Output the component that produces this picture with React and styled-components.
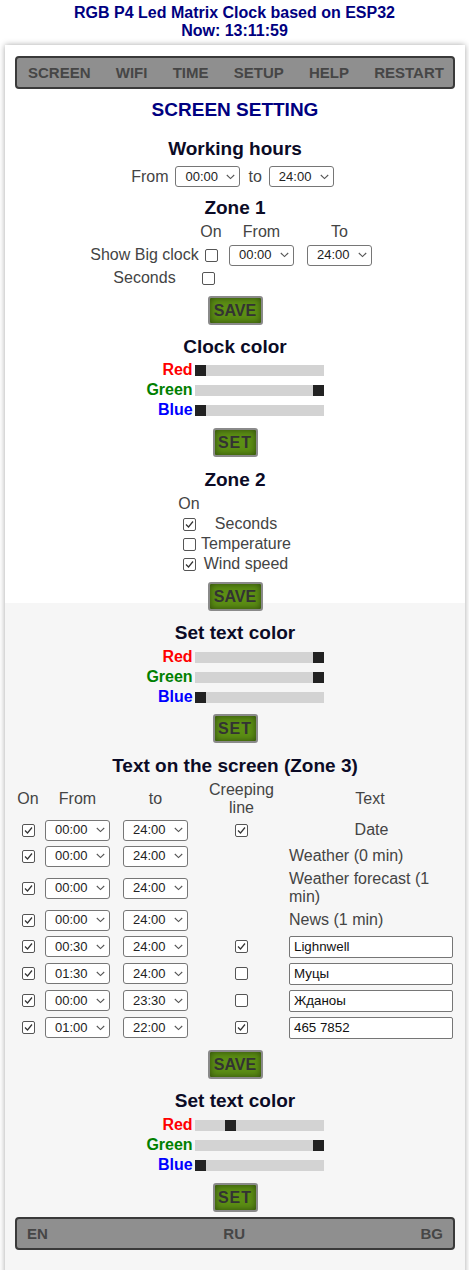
import React from 'react';
import styled, { createGlobalStyle } from 'styled-components';

const Global = createGlobalStyle`
  html, body { margin: 0; padding: 0; background: #fff; }
  body { font-family: "Liberation Sans", Arial, sans-serif; color: #444; font-size: 16px; }
`;

const Header = styled.header`
  padding-top: 4px;
  text-align: center;
  color: #000080;
  font-weight: bold;
  font-size: 16px;
  line-height: 18px;
`;

const Container = styled.main`
  width: 460px;
  margin: 5px 0 0 5px;
  background: #fff;
  box-shadow: 0 0 6px rgba(0, 0, 0, 0.35);
`;

const Section = styled.section`
  display: flex;
  flex-direction: column;
  align-items: center;
  padding: ${p => (p.$gray ? '0 10px 30px' : '11px 10px 0')};
  background: ${p => (p.$gray ? '#f6f6f6' : '#fff')};
`;

const Bar = styled.nav`
  align-self: stretch;
  box-sizing: border-box;
  height: 33px;
  margin-top: ${p => p.$mt || 0}px;
  display: flex;
  align-items: center;
  justify-content: space-between;
  padding: ${p => p.$pad};
  background: #8f8f8f;
  border: 2px solid #3a3a3a;
  border-radius: 4px;
  font-weight: bold;
  font-size: 15px;
  color: #464646;
`;

const Title = styled.h1`
  margin: 10px 0 0;
  font-size: 19px;
  line-height: 22px;
  color: #000080;
`;

const Heading = styled.h2`
  margin: ${p => p.$mt}px 0 0;
  font-size: 19px;
  line-height: 22px;
  color: #0b0b26;
`;

const FromRow = styled.div`
  margin: 6px 5px 0 0;
  height: 21px;
  display: flex;
  align-items: center;
  font-size: 16px;
  color: #444;
  & > span:first-child { margin-right: 7px; }
  & > span.to { margin: 0 7px 0 8px; }
`;

const Zone1Grid = styled.div`
  margin-top: 4px;
  display: grid;
  grid-template-columns: 108px 25px 76px 80px;
  grid-template-rows: 18px 22px 18px;
  row-gap: 3px;
  justify-content: center;
  justify-items: center;
  align-items: center;
  font-size: 16px;
  line-height: 18px;
  color: #444;
`;

const Cell = styled.div`
  justify-self: ${p => p.$justify || 'center'};
  margin-left: ${p => p.$ml || 0}px;
  display: flex;
  align-items: center;
  white-space: nowrap;
`;

const SelectBox = styled.div`
  box-sizing: border-box;
  width: 65px;
  height: 21px;
  display: flex;
  align-items: center;
  justify-content: space-between;
  padding: 0 4px 0 9px;
  background: #fff;
  border: 1px solid #767676;
  border-radius: 3px;
  font-size: 13px;
  color: #222;
`;

const Box = styled.span`
  box-sizing: border-box;
  width: 13px;
  height: 13px;
  display: inline-flex;
  align-items: center;
  justify-content: center;
  background: #fff;
  border: 1px solid #555;
  border-radius: 2px;
`;

const GreenButton = styled.button`
  position: relative;
  z-index: 1;
  box-sizing: border-box;
  width: ${p => p.$w}px;
  height: 29px;
  margin: ${p => p.$mt}px 0 ${p => p.$mb || 0}px;
  padding: 0;
  background: #5c8f14;
  box-shadow: inset 0 0 7px rgba(0, 0, 0, 0.5);
  border: 2px solid #8a8a8a;
  border-radius: 3px;
  font-family: "Liberation Sans", Arial, sans-serif;
  font-weight: bold;
  font-size: 16px;
  letter-spacing: ${p => p.$ls || 0}px;
  color: #333;
`;

const SliderGrid = styled.div`
  margin-top: ${p => p.$mt}px;
  display: grid;
  grid-template-columns: auto 129px;
  grid-auto-rows: 20px;
  column-gap: 2px;
  justify-content: center;
  align-items: center;
`;

const SliderLabel = styled.span`
  justify-self: end;
  font-weight: bold;
  font-size: 16px;
  line-height: 20px;
  color: ${p => p.$color};
`;

const Track = styled.div`
  position: relative;
  height: 11px;
  background: #d3d3d3;
`;

const Thumb = styled.div`
  position: absolute;
  top: 0;
  width: 11px;
  height: 11px;
  background: #222;
`;

const Zone2Grid = styled.div`
  margin-top: 3px;
  display: grid;
  grid-template-columns: 22px 92px;
  grid-auto-rows: 20px;
  justify-content: center;
  justify-items: center;
  align-items: center;
  font-size: 16px;
  line-height: 18px;
  color: #444;
`;

const Table = styled.div`
  align-self: stretch;
  margin-top: 4px;
  display: flex;
  flex-direction: column;
  font-size: 16px;
  line-height: 18px;
  color: #444;
`;

const TRow = styled.div`
  height: ${p => p.$h}px;
  display: grid;
  grid-template-columns: 26px 73px 83px 89px 168px;
  justify-items: center;
  align-items: center;
`;

const HeadCell = styled.div`
  text-align: center;
`;

const TextCell = styled.div`
  justify-self: stretch;
  box-sizing: border-box;
  padding-left: 3px;
  text-align: ${p => (p.$center ? 'center' : 'left')};
`;

const TextInput = styled.input`
  display: block;
  box-sizing: border-box;
  width: 164px;
  height: 22px;
  margin: 0;
  padding: 0 4px;
  background: #fff;
  border: 1px solid #767676;
  border-radius: 2px;
  font-family: "Liberation Sans", Arial, sans-serif;
  font-size: 13.33px;
  color: #111;
`;

const Check = ({ on }) => (
  <Box>
    {on && (
      <svg width="11" height="11" viewBox="0 0 11 11">
        <polyline points="2,5.5 4.5,8 9,2.5" fill="none" stroke="#333" strokeWidth="1.2" />
      </svg>
    )}
  </Box>
);

const Select = ({ value }) => (
  <SelectBox>
    <span>{value}</span>
    <svg width="9" height="6" viewBox="0 0 9 6">
      <polyline points="0.8,1 4.5,4.6 8.2,1" fill="none" stroke="#555" strokeWidth="1.1" />
    </svg>
  </SelectBox>
);

const Slider = ({ label, color, value }) => (
  <>
    <SliderLabel $color={color}>{label}</SliderLabel>
    <Track>
      <Thumb style={{ left: Math.round((value / 255) * 118) }} />
    </Track>
  </>
);

const ColorSliders = ({ mt, r, g, b }) => (
  <SliderGrid $mt={mt}>
    <Slider label="Red" color="#ff0000" value={r} />
    <Slider label="Green" color="#008000" value={g} />
    <Slider label="Blue" color="#0000ff" value={b} />
  </SliderGrid>
);

const rows = [
  { h: 26, from: '00:00', to: '24:00', creep: true, text: 'Date', center: true },
  { h: 26, from: '00:00', to: '24:00', text: 'Weather (0 min)' },
  { h: 38, from: '00:00', to: '24:00', text: 'Weather forecast (1 min)' },
  { h: 26, from: '00:00', to: '24:00', text: 'News (1 min)' },
  { h: 27, from: '00:30', to: '24:00', creep: true, input: 'Lighnwell' },
  { h: 27, from: '01:30', to: '24:00', creep: false, input: 'Муцы' },
  { h: 27, from: '00:00', to: '23:30', creep: false, input: 'Жданоы' },
  { h: 27, from: '01:00', to: '22:00', creep: true, input: '465 7852' },
];

export default function App() {
  return (
    <>
      <Global />
      <Header>
        <div>RGB P4 Led Matrix Clock based on ESP32</div>
        <div>Now: 13:11:59</div>
      </Header>
      <Container>
        <Section>
          <Bar $pad="0 9px 0 11px">
            <span>SCREEN</span>
            <span>WIFI</span>
            <span>TIME</span>
            <span>SETUP</span>
            <span>HELP</span>
            <span>RESTART</span>
          </Bar>
          <Title>SCREEN SETTING</Title>
          <Heading $mt={17}>Working hours</Heading>
          <FromRow>
            <span>From</span>
            <Select value="00:00" />
            <span className="to">to</span>
            <Select value="24:00" />
          </FromRow>
          <Heading $mt={10}>Zone 1</Heading>
          <Zone1Grid>
            <Cell />
            <Cell>On</Cell>
            <Cell>From</Cell>
            <Cell>To</Cell>
            <Cell>Show Big clock</Cell>
            <Cell><Check /></Cell>
            <Cell><Select value="00:00" /></Cell>
            <Cell><Select value="24:00" /></Cell>
            <Cell>Seconds</Cell>
            <Cell $justify="start" $ml={3}><Check /></Cell>
          </Zone1Grid>
          <GreenButton $w={55} $mt={9}>SAVE</GreenButton>
          <Heading $mt={11}>Clock color</Heading>
          <ColorSliders mt={2} r={0} g={255} b={0} />
          <GreenButton $w={45} $mt={8} $ls={1}>SET</GreenButton>
          <Heading $mt={12}>Zone 2</Heading>
          <Zone2Grid>
            <Cell>On</Cell>
            <Cell />
            <Cell><Check on /></Cell>
            <Cell>Seconds</Cell>
            <Cell><Check /></Cell>
            <Cell>Temperature</Cell>
            <Cell><Check on /></Cell>
            <Cell>Wind speed</Cell>
          </Zone2Grid>
          <GreenButton $w={55} $mt={8} $mb={-8}>SAVE</GreenButton>
        </Section>
        <Section $gray>
          <Heading $mt={19}>Set text color</Heading>
          <ColorSliders mt={3} r={255} g={255} b={0} />
          <GreenButton $w={45} $mt={7} $ls={1}>SET</GreenButton>
          <Heading $mt={12}>Text on the screen (Zone 3)</Heading>
          <Table>
            <TRow $h={36}>
              <HeadCell>On</HeadCell>
              <HeadCell>From</HeadCell>
              <HeadCell>to</HeadCell>
              <HeadCell>Creeping<br />line</HeadCell>
              <HeadCell>Text</HeadCell>
            </TRow>
            {rows.map((r, i) => (
              <TRow key={i} $h={r.h}>
                <Check on />
                <Select value={r.from} />
                <Select value={r.to} />
                {r.creep === undefined ? <span /> : <Check on={r.creep} />}
                {r.input ? (
                  <TextCell><TextInput defaultValue={r.input} /></TextCell>
                ) : (
                  <TextCell $center={r.center}>{r.text}</TextCell>
                )}
              </TRow>
            ))}
          </Table>
          <GreenButton $w={55} $mt={9}>SAVE</GreenButton>
          <Heading $mt={11}>Set text color</Heading>
          <ColorSliders mt={3} r={65} g={255} b={0} />
          <GreenButton $w={45} $mt={8} $ls={1}>SET</GreenButton>
          <Bar $mt={5} $pad="0 10px 0 10px">
            <span>EN</span>
            <span>RU</span>
            <span>BG</span>
          </Bar>
        </Section>
      </Container>
    </>
  );
}
